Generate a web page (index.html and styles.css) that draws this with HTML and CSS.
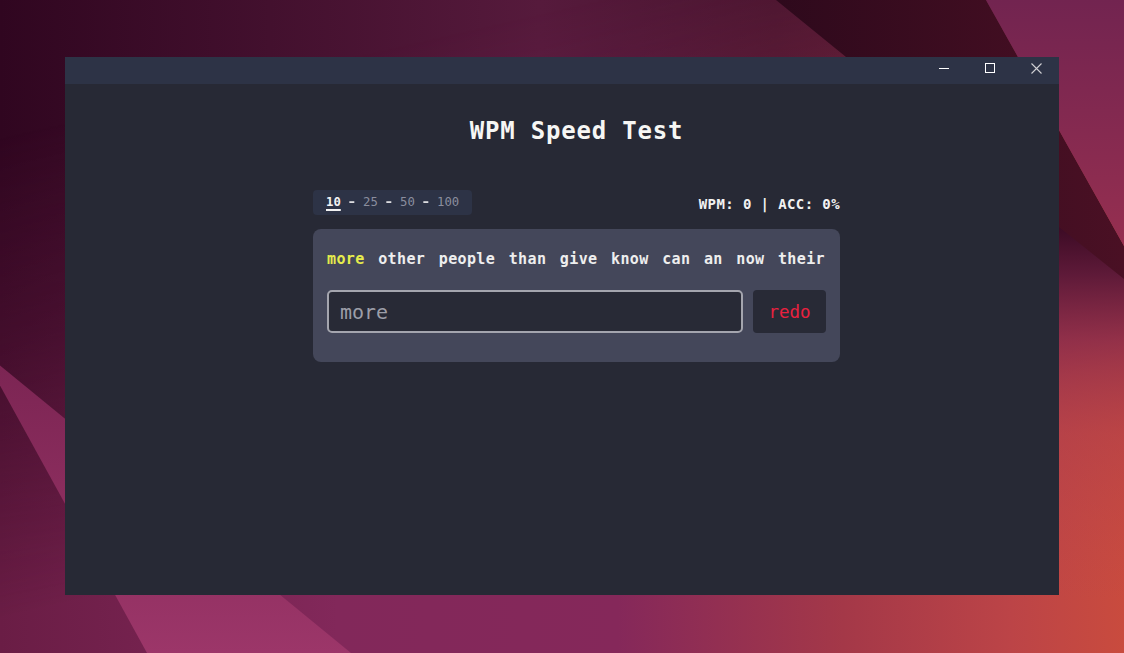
FILE: index.html
```html
<!DOCTYPE html>
<html lang="en">
<head>
<meta charset="utf-8">
<title>WPM Speed Test</title>
<link rel="stylesheet" href="styles.css">
</head>
<body>
<div class="desktop">
  <svg class="wallpaper" viewBox="0 0 1124 653" width="1124" height="653" aria-hidden="true">
    <defs>
      <linearGradient id="gTop" x1="0" y1="0" x2="1124" y2="0" gradientUnits="userSpaceOnUse">
        <stop offset="0" stop-color="#300620"/>
        <stop offset="0.48" stop-color="#561a3c"/>
        <stop offset="0.69" stop-color="#4a1530"/>
        <stop offset="1" stop-color="#5a1a3a"/>
      </linearGradient>
      <linearGradient id="gBot" x1="0" y1="0" x2="1124" y2="0" gradientUnits="userSpaceOnUse">
        <stop offset="0" stop-color="#6a1d45"/>
        <stop offset="0.3" stop-color="#82285a"/>
        <stop offset="0.55" stop-color="#85285a"/>
        <stop offset="0.75" stop-color="#a43848"/>
        <stop offset="0.9" stop-color="#bc4447"/>
        <stop offset="1" stop-color="#c94b3e"/>
      </linearGradient>
      <linearGradient id="gFade" x1="0" y1="0" x2="150" y2="653" gradientUnits="userSpaceOnUse">
        <stop offset="0.2" stop-color="#000"/>
        <stop offset="0.5" stop-color="#555"/>
        <stop offset="0.9" stop-color="#fff"/>
      </linearGradient>
      <mask id="mFade">
        <rect width="1124" height="653" fill="url(#gFade)"/>
      </mask>
      <linearGradient id="gDark" x1="776" y1="0" x2="1124" y2="0" gradientUnits="userSpaceOnUse">
        <stop offset="0" stop-color="#2e091c"/>
        <stop offset="1" stop-color="#4a1024"/>
      </linearGradient>
      <linearGradient id="gMag" x1="0" y1="0" x2="0" y2="246" gradientUnits="userSpaceOnUse">
        <stop offset="0" stop-color="#722450"/>
        <stop offset="1" stop-color="#962f50"/>
      </linearGradient>
      <linearGradient id="gShade" x1="0" y1="230" x2="0" y2="600" gradientUnits="userSpaceOnUse">
        <stop offset="0" stop-color="#3e0c26" stop-opacity="1"/>
        <stop offset="0.12" stop-color="#5a1838" stop-opacity="0.95"/>
        <stop offset="0.3" stop-color="#84294c" stop-opacity="0.75"/>
        <stop offset="0.55" stop-color="#a63a50" stop-opacity="0.4"/>
        <stop offset="1" stop-color="#b84250" stop-opacity="0"/>
      </linearGradient>
      <linearGradient id="gBright" x1="0" y1="349" x2="0" y2="653" gradientUnits="userSpaceOnUse">
        <stop offset="0" stop-color="#7a2452"/>
        <stop offset="1" stop-color="#9c3669"/>
      </linearGradient>
    </defs>
    <rect width="1124" height="653" fill="url(#gTop)"/>
    <rect width="1124" height="653" fill="url(#gBot)" mask="url(#mFade)"/>
    <polygon points="980,145 1124,260 1124,600 980,600" fill="url(#gShade)"/>
    <polygon points="776,0 986,0 1124,246 1124,279 1059,227 846,57" fill="url(#gDark)"/>
    <polygon points="986,0 1124,0 1124,246" fill="url(#gMag)"/>
    <polygon points="-20,349 351,653 147,653" fill="url(#gBright)"/>
  </svg>

  <div class="window">
    <div class="titlebar">
      <div class="ctrl">
        <svg width="10" height="10" viewBox="0 0 10 10"><rect x="0" y="5" width="10" height="1" fill="#ffffff"/></svg>
      </div>
      <div class="ctrl">
        <svg width="10" height="10" viewBox="0 0 10 10"><rect x="0.5" y="0.5" width="9" height="9" fill="none" stroke="#ffffff" stroke-width="1"/></svg>
      </div>
      <div class="ctrl">
        <svg width="11" height="11" viewBox="0 0 11 11"><path d="M0.5 0.5 L10.5 10.5 M10.5 0.5 L0.5 10.5" stroke="#d0d0d4" stroke-width="1.1" fill="none"/></svg>
      </div>
    </div>

    <main class="content">
      <h1 class="title">WPM Speed Test</h1>
      <div class="panel">
        <div class="toolbar">
          <div class="counts">
            <span class="count active">10</span>
            <span class="sep">-</span>
            <span class="count">25</span>
            <span class="sep">-</span>
            <span class="count">50</span>
            <span class="sep">-</span>
            <span class="count">100</span>
          </div>
          <div class="stats">WPM: 0 | ACC: 0%</div>
        </div>
        <div class="card">
          <div class="words">
            <span class="word current">more</span>
            <span class="word">other</span>
            <span class="word">people</span>
            <span class="word">than</span>
            <span class="word">give</span>
            <span class="word">know</span>
            <span class="word">can</span>
            <span class="word">an</span>
            <span class="word">now</span>
            <span class="word">their</span>
          </div>
          <div class="input-row">
            <input class="typing" type="text" placeholder="more">
            <button class="redo" type="button">redo</button>
          </div>
        </div>
      </div>
    </main>
  </div>
</div>
</body>
</html>
```

FILE: styles.css
```css
html, body {
  margin: 0;
  padding: 0;
}

body {
  width: 1124px;
  height: 653px;
  overflow: hidden;
  font-family: "DejaVu Sans Mono", "Liberation Mono", monospace;
  background: #561a3c;
}

.desktop {
  position: relative;
  width: 1124px;
  height: 653px;
  overflow: hidden;
}

.wallpaper {
  position: absolute;
  left: 0;
  top: 0;
  display: block;
}

.window {
  position: absolute;
  left: 65px;
  top: 57px;
  width: 994px;
  height: 538px;
  background: #272935;
  display: flex;
  flex-direction: column;
}

.titlebar {
  height: 27px;
  flex: 0 0 27px;
  background: #2d3346;
  display: flex;
  justify-content: flex-end;
}

.ctrl {
  width: 46px;
  height: 27px;
  display: flex;
  justify-content: center;
  align-items: flex-start;
  padding-top: 6px;
  box-sizing: border-box;
}

.ctrl svg {
  display: block;
}

.content {
  flex: 1;
  display: flex;
  flex-direction: column;
  align-items: center;
  padding: 31px 0 0 29px;
}

.title {
  margin: 0;
  font-size: 24px;
  line-height: 32px;
  letter-spacing: 0.8px;
  font-weight: bold;
  color: #f6f6f4;
}

.panel {
  width: 527px;
  margin-top: 43px;
}

.toolbar {
  display: flex;
  justify-content: space-between;
  align-items: center;
  height: 25px;
}

.counts {
  background: #2d3346;
  border-radius: 4px;
  padding: 5px 13px;
  font-size: 12.3px;
  line-height: 15px;
  color: #8b8e9e;
  display: flex;
  gap: 7.4px;
}

.count.active {
  color: #f2f2f2;
  font-weight: bold;
  text-decoration: underline;
  text-decoration-thickness: 2px;
  text-underline-offset: 3px;
}

.sep {
  color: #dcdce0;
  font-weight: bold;
  display: inline-block;
  transform: scaleX(1.3);
}

.stats {
  font-size: 14px;
  line-height: 18px;
  letter-spacing: 0.4px;
  font-weight: bold;
  color: #f2f2f2;
  padding-top: 3px;
}

.card {
  margin-top: 14px;
  background: #44475a;
  border-radius: 8px;
  padding: 20px 14px 29px;
}

.words {
  display: flex;
  flex-wrap: nowrap;
  gap: 13.5px;
  font-size: 15px;
  line-height: 20px;
  letter-spacing: 0.38px;
  font-weight: bold;
  color: #eeeeee;
}

.word.current {
  color: #e6ec4c;
}

.input-row {
  margin-top: 21px;
  display: flex;
  gap: 10px;
  height: 43px;
}

.typing {
  flex: 1;
  min-width: 0;
  box-sizing: border-box;
  height: 43px;
  margin: 0;
  border: 2px solid #a4a5ae;
  border-radius: 5px;
  background: #282a36;
  padding: 0 11px;
  font-family: "DejaVu Sans Mono", "Liberation Mono", monospace;
  font-size: 20px;
  color: #e0e0e0;
  outline: none;
}

.typing::placeholder {
  color: #9c9ea8;
}

.redo {
  width: 73px;
  height: 43px;
  margin: 0;
  border: none;
  border-radius: 4px;
  background: #282a36;
  color: #e8213f;
  font-family: "DejaVu Sans Mono", "Liberation Mono", monospace;
  font-size: 17.5px;
  padding: 0;
  cursor: pointer;
}
```
